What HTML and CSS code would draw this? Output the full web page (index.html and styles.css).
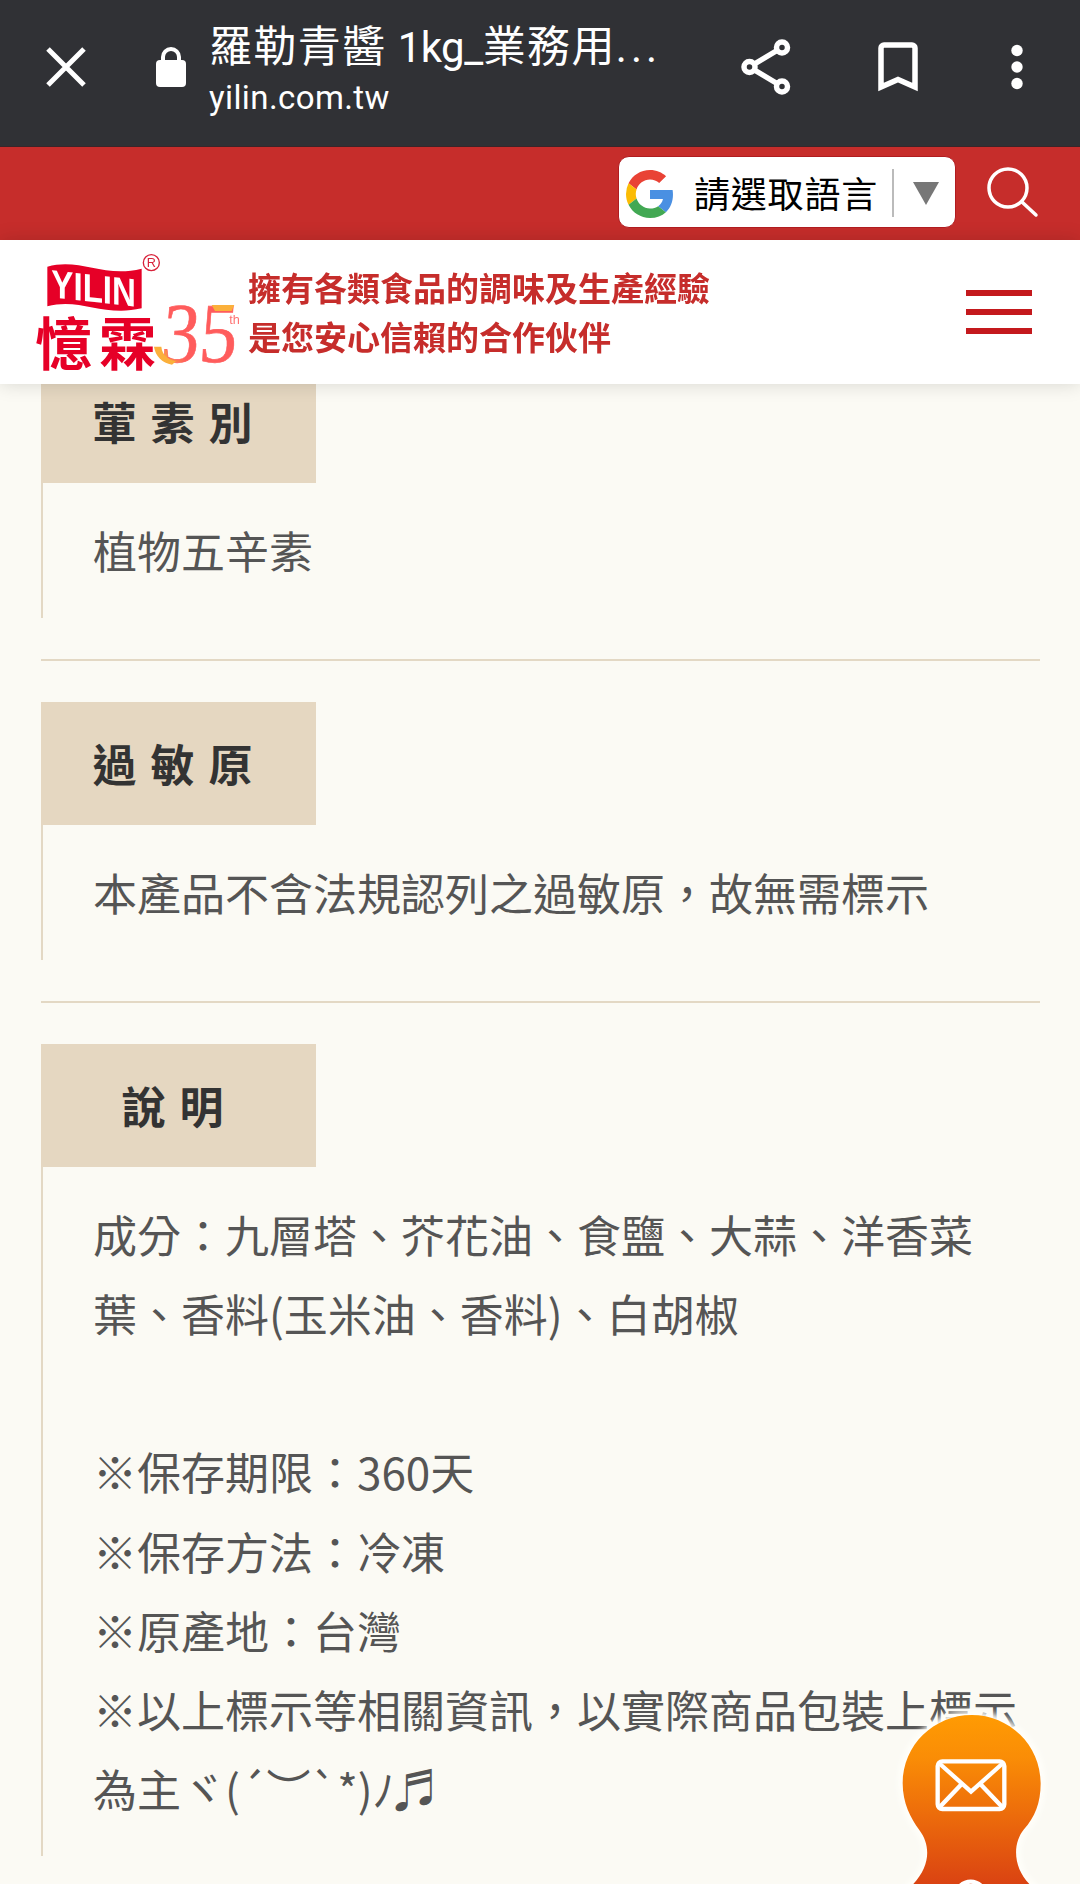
FILE: index.html
```
<!DOCTYPE html>
<html lang="zh-Hant">
<head>
    <meta charset="UTF-8">
    <meta name="viewport" content="width=device-width, initial-scale=1.0">
    <title>羅勒青醬 1kg_業務用</title>
    <link rel="stylesheet" href="styles.css">
</head>
<body>
    <div class="top">
        <div class="browser-bar">
            <svg class="icon-close" viewBox="0 0 40 40"><path d="M2 2L38 38M38 2L2 38"/></svg>
            <svg class="icon-lock" viewBox="0 0 30 40"><rect x="0" y="13" width="30" height="27" rx="4"/><path d="M7 15V10a8 8 0 0 1 16 0v5"/></svg>
            <div class="page-info">
                <div class="page-title">羅勒青醬 <span class="latin">1kg_</span>業務用<span class="dots">...</span></div>
                <div class="page-url">yilin.com.tw</div>
            </div>
            <svg class="icon-share" viewBox="0 0 50 56">
                <path d="M41 8.500L8.500 28L41 47.500"/>
                <circle cx="41" cy="8.500" r="5.500"/><circle cx="8.500" cy="28" r="5.500"/><circle cx="41" cy="47.500" r="5.500"/>
            </svg>
            <svg class="icon-bookmark" viewBox="0 0 40 50"><path d="M3 45V6a3 3 0 0 1 3-3h28a3 3 0 0 1 3 3v39L20 37.500z"/></svg>
            <svg class="icon-more" viewBox="0 0 12 46"><circle cx="6" cy="6.500" r="5.700"/><circle cx="6" cy="23" r="5.700"/><circle cx="6" cy="39.500" r="5.700"/></svg>
        </div>

        <div class="red-bar">
            <div class="translate">
                <svg class="google" viewBox="0 0 48 48">
                    <path fill="#e94235" d="M24 9.500c3.540 0 6.710 1.220 9.210 3.600l6.850-6.850C35.900 2.380 30.470 0 24 0 14.620 0 6.510 5.380 2.560 13.220l7.980 6.190C12.430 13.720 17.740 9.500 24 9.500z"/>
                    <path fill="#4a90e2" d="M46.980 24.550c0-1.570-.150-3.090-.380-4.550H24v9.020h12.940c-.580 2.960-2.260 5.480-4.780 7.180l7.730 6c4.510-4.180 7.090-10.360 7.090-17.650z"/>
                    <path fill="#fbbc05" d="M10.530 28.590A14.500 14.500 0 0 1 9.770 24c0-1.600.270-3.140.760-4.590l-7.980-6.190A23.900 23.900 0 0 0 0 24c0 3.880.920 7.540 2.560 10.780z"/>
                    <path fill="#42a853" d="M24 48c6.480 0 11.930-2.130 15.890-5.810l-7.730-6c-2.150 1.450-4.920 2.300-8.160 2.300-6.260 0-11.570-4.220-13.470-9.910l-7.980 6.190C6.510 42.620 14.620 48 24 48z"/>
                </svg>
                <span class="translate-text">請選取語言</span>
                <span class="arrow"></span>
            </div>
            <svg class="icon-search" viewBox="0 0 52 52"><circle cx="21" cy="21" r="19"/><path d="M35 35L49 48"/></svg>
        </div>

        <div class="site-header">
            <svg class="logo" viewBox="0 0 720 432">
                <defs>
                    <linearGradient id="anniv" x1="0" y1="1" x2="1" y2="0">
                        <stop offset="0.120" stop-color="#f9b13c"/>
                        <stop offset="0.280" stop-color="#ff5c5c"/>
                        <stop offset="1" stop-color="#ff5c5c"/>
                    </linearGradient>
                </defs>
                <path fill="#e60027" d="M82 80C180 52 250 115 365 86V205C250 232 180 172 82 199z"/>
                <text class="logo-flag" transform="matrix(1 .11 0 1 94 172)" textLength="254" lengthAdjust="spacingAndGlyphs">YILIN</text>
                <circle class="logo-ring" cx="394" cy="68" r="24"/>
                <text class="logo-r" x="394" y="82">R</text>
                <text class="logo-name" x="46" y="375">憶</text>
                <text class="logo-name" x="236" y="375">霖</text>
                <text class="logo-35" transform="matrix(1 0 -.08 1 420 367)" textLength="226" lengthAdjust="spacingAndGlyphs">35</text>
                <path fill="#fbb03b" d="M402 320h22c3 25 18 38 44 44l-12 10c-30-6-50-26-54-54zM575 195h68l-8 18h-50z"/>
                <text class="logo-th" x="628" y="251">th</text>
            </svg>
            <div class="slogan">擁有各類食品的調味及生產經驗<br>是您安心信賴的合作伙伴</div>
            <div class="menu"><span></span><span></span><span></span></div>
        </div>
    </div>

    <main class="product">
        <section class="item">
            <h2>葷素別</h2>
            <div class="text">植物五辛素</div>
        </section>
        <section class="item">
            <h2>過敏原</h2>
            <div class="text">本產品不含法規認列之過敏原，故無需標示</div>
        </section>
        <section class="item">
            <h2>說明</h2>
            <div class="text">成分：九層塔、芥花油、食鹽、大蒜、洋香菜葉、香料(玉米油、香料)、白胡椒<br><br>※保存期限：360天<br>※保存方法：冷凍<br>※原產地：台灣<br>※以上標示等相關資訊，以實際商品包裝上標示為主ヾ(´︶`*)ﾉ♬</div>
        </section>
    </main>

    <svg class="contact" viewBox="0 0 600 612">
        <defs>
            <linearGradient id="orange" gradientUnits="userSpaceOnUse" x1="0" y1="105" x2="0" y2="612">
                <stop offset="0" stop-color="#ff9b03"/>
                <stop offset="0.250" stop-color="#fa8d06"/>
                <stop offset="0.650" stop-color="#ea660c"/>
                <stop offset="1" stop-color="#da4312"/>
            </linearGradient>
            <filter id="halo" x="-20%" y="-20%" width="140%" height="140%"><feGaussianBlur stdDeviation="9"/></filter>
            <path id="blob" d="M98 614C150 560 154 498 118 450C92 415 68 370 68 310C68 195 162 105 275 105S482 195 482 310C482 370 464 412 432 448C396 492 400 565 450 614z"/>
        </defs>
        <use href="#blob" fill="#fffefa" stroke="#fffefa" stroke-width="26" filter="url(#halo)"/>
        <use href="#blob" fill="url(#orange)"/>
        <g class="contact-line">
            <rect x="173" y="244" width="200" height="143" rx="14"/>
            <path d="M180 252L273 335L366 252M180 380L243 314M366 380L303 314"/>
            <circle cx="272" cy="650" r="45"/>
        </g>
    </svg>
</body>
</html>
```

FILE: styles.css
```
* {
    box-sizing: border-box;
}

body {
    margin: 0;
    height: 1884px;
    overflow: hidden;
    background: #fbfaf4;
    color: #555;
    font-family: "Noto Sans CJK TC", sans-serif;
}

svg {
    display: block;
    flex: none;
}

.top {
    position: fixed;
    top: 0;
    left: 0;
    right: 0;
    z-index: 10;
}

/* browser bar */
.browser-bar {
    display: flex;
    align-items: flex-start;
    height: 147px;
    background: #303135;
    border-bottom: 1px solid #3b2529;
    color: #fff;
}

.browser-bar svg {
    fill: none;
    stroke: #fff;
}

.browser-bar .icon-close {
    width: 40px;
    height: 40px;
    margin: 47px 0 0 46px;
    stroke-width: 5;
}

.browser-bar .icon-lock {
    width: 30px;
    height: 40px;
    margin: 47px 0 0 70px;
    fill: #fff;
    stroke-width: 4;
}

.browser-bar .icon-lock rect {
    stroke: none;
}

.browser-bar .icon-lock path {
    fill: none;
}

.page-info {
    width: 530px;
    margin: 14px 0 0 23px;
    white-space: nowrap;
}

.page-title {
    height: 59px;
    font-size: 43px;
    line-height: 58px;
    letter-spacing: 1.4px;
}

.page-title .latin,
.page-title .dots {
    font-family: Roboto, sans-serif;
    font-size: 42px;
    letter-spacing: -0.5px;
}

.page-title .dots {
    letter-spacing: 4px;
}

.page-url {
    font-family: Roboto, sans-serif;
    font-size: 33px;
    line-height: 49px;
    letter-spacing: 0.4px;
}

.browser-bar .icon-share {
    width: 50px;
    height: 56px;
    margin: 39px 0 0 2px;
    stroke-width: 5.500;
}

.browser-bar .icon-share circle {
    fill: #303135;
}

.browser-bar .icon-bookmark {
    width: 40px;
    height: 50px;
    margin: 42px 0 0 87px;
    stroke-width: 5.500;
}

.browser-bar .icon-more {
    width: 12px;
    height: 46px;
    margin: 44px 0 0 93px;
    fill: #fff;
    stroke: none;
}

/* language + search */
.red-bar {
    display: flex;
    justify-content: flex-end;
    height: 93px;
    padding: 9px 41px 0 0;
    background: #c62d2b;
}

.translate {
    display: flex;
    align-items: center;
    width: 338px;
    height: 72px;
    padding-left: 7px;
    background: #fff;
    border: 1px solid #b01c20;
    border-radius: 11px;
    color: #000;
}

.google {
    width: 48px;
    height: 48px;
    margin-top: 3px;
}

.translate-text {
    width: 200px;
    height: 48px;
    margin: 2px 0 0 20px;
    border-right: 2px solid #bbb;
    font-size: 36px;
    line-height: 46px;
    letter-spacing: 0.8px;
}

.arrow {
    margin: 3px 0 0 19px;
    border: 13.500px solid transparent;
    border-top: 23px solid #777;
    border-bottom: 0;
}

.icon-search {
    width: 52px;
    height: 52px;
    margin: 11px 0 0 31px;
    fill: none;
    stroke: #fff;
    stroke-width: 3.500;
    stroke-linecap: round;
}

/* site header */
.site-header {
    display: flex;
    height: 144px;
    background: #fff;
    box-shadow: 0 0 18px rgba(0,0,0,0.150);
}

.logo {
    width: 240px;
    height: 144px;
    margin-left: 20px;
}

.logo-flag {
    fill: #fff;
    font: bold 118px "Liberation Sans", sans-serif;
}

.logo-ring {
    fill: none;
    stroke: #d8213a;
    stroke-width: 4;
}

.logo-r {
    fill: #d8213a;
    font: 38px "Liberation Sans", sans-serif;
    text-anchor: middle;
}

.logo-name {
    fill: #e60027;
    font: bold 172px "Noto Sans CJK TC", sans-serif;
}

.logo-35 {
    fill: url(#anniv);
    stroke: #ff5c5c;
    stroke-width: 2;
    font: 256px "Liberation Serif", serif;
}

.logo-th {
    fill: #ff7070;
    font: 38px "Liberation Sans", sans-serif;
}

.slogan {
    flex: 1;
    margin: 23px 0 0 -12px;
    color: #c62d2b;
    font-size: 33px;
    font-weight: bold;
    line-height: 49px;
}

.menu {
    display: flex;
    flex-direction: column;
    gap: 13.500px;
    width: 66px;
    margin: 50px 48px 0 0;
}

.menu span {
    height: 5.500px;
    background: #c4191d;
}

/* product info */
.product {
    padding: 360px 40px 0 41px;
}

.item {
    margin-bottom: 41px;
    padding-bottom: 41px;
    border-bottom: 2px solid #e3d8c4;
}

.item:last-child {
    border-bottom: 0;
}

.item h2 {
    width: 275px;
    height: 123px;
    margin: 0;
    padding-left: 2px;
    background: #e5d7c1;
    color: #333;
    font-size: 44px;
    font-weight: bold;
    line-height: 122px;
    letter-spacing: 14px;
    text-align: center;
}

.text {
    padding: 28px 20px 28px 50px;
    border-left: 2px solid #e3d8c4;
    font-size: 44px;
    line-height: 79.100px;
}

/* floating contact button */
.contact {
    position: fixed;
    right: 0;
    bottom: 0;
    z-index: 5;
    width: 200px;
    height: 204px;
}

.contact-line {
    fill: none;
    stroke: #fff;
    stroke-width: 13;
}
```
